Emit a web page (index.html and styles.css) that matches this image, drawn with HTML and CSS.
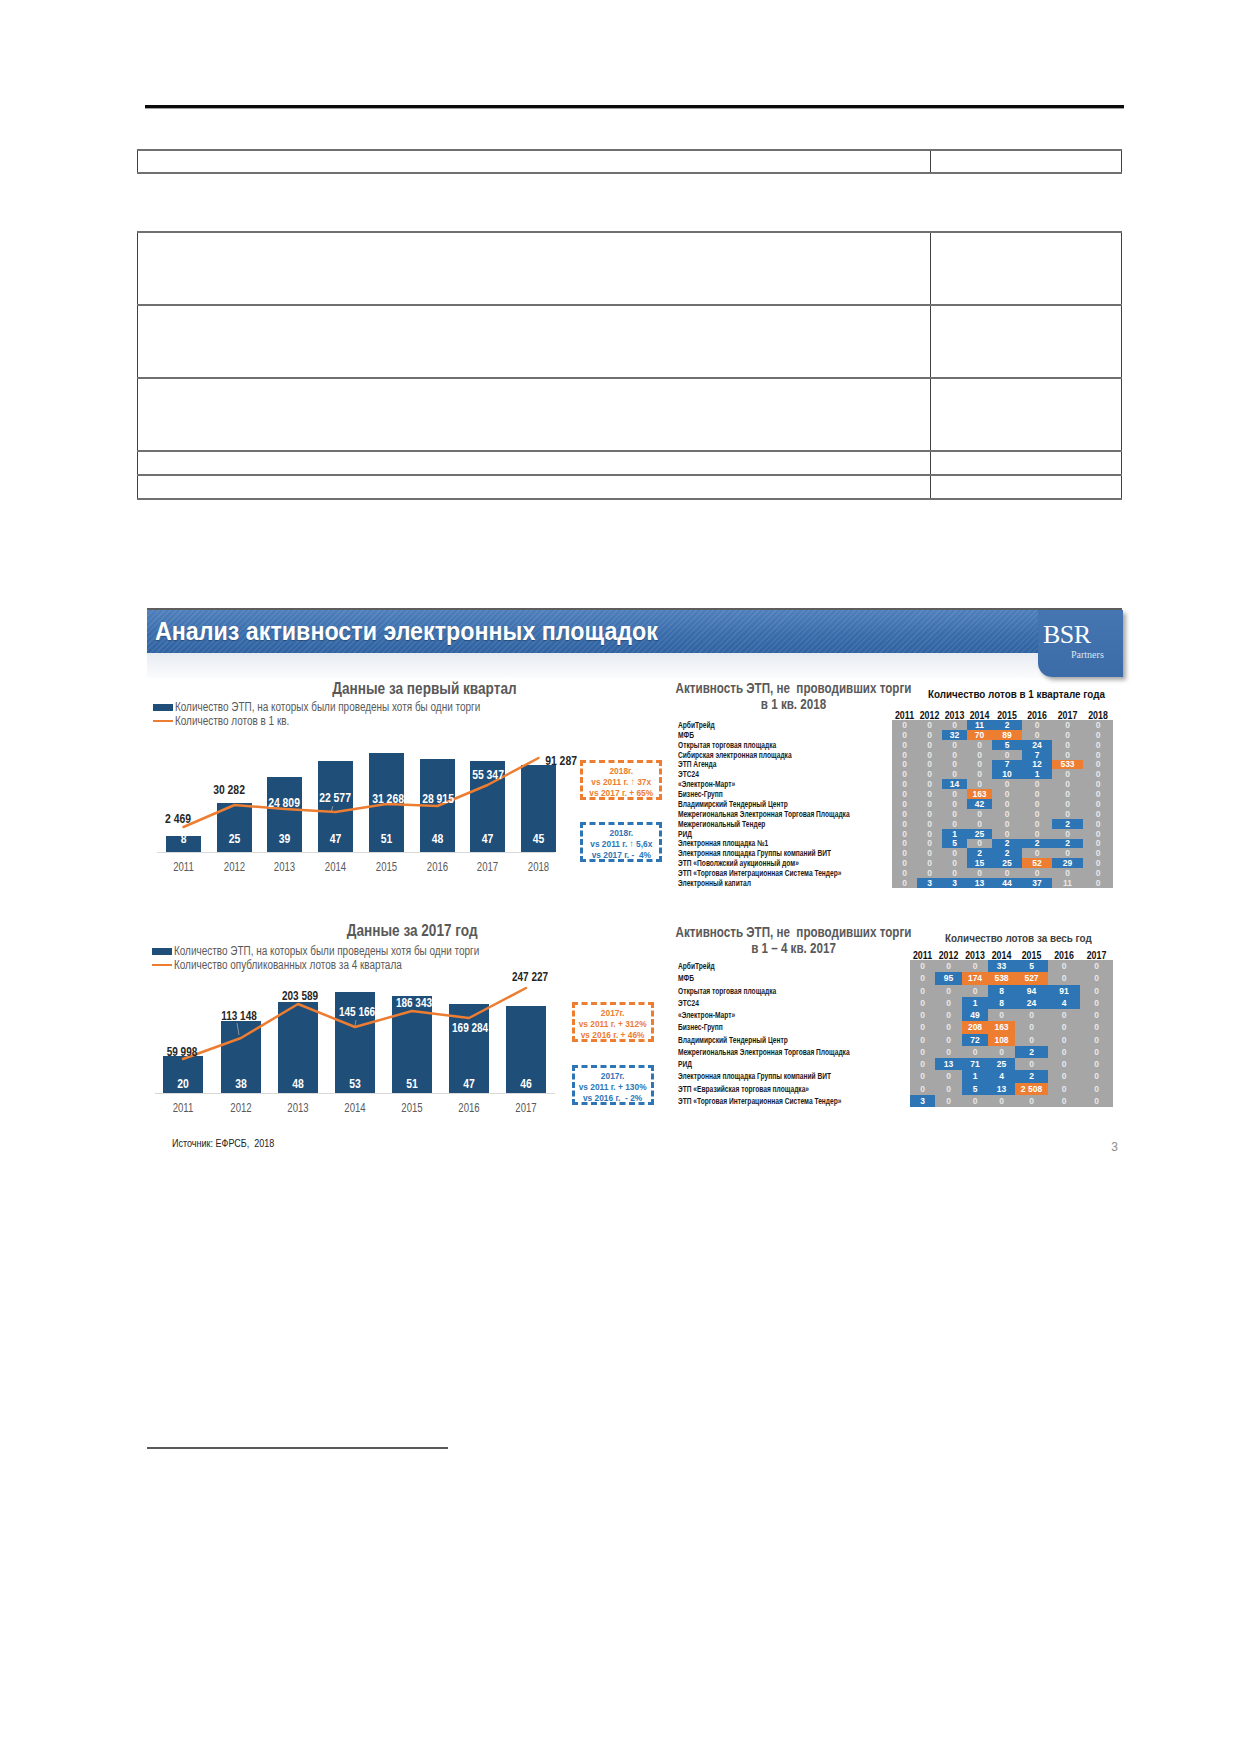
FILE: index.html
```html
<!DOCTYPE html>
<html lang="ru">
<head>
<meta charset="utf-8">
<title>Анализ активности электронных площадок</title>
<link rel="stylesheet" href="styles.css">
</head>
<body>
<div class="doc">
  <div class="rule"></div>

  <table class="t1">
    <colgroup><col class="ca"><col class="cb"></colgroup>
    <tr><td></td><td></td></tr>
  </table>

  <table class="t2">
    <colgroup><col class="ca"><col class="cb"></colgroup>
    <tr class="tall"><td></td><td></td></tr>
    <tr class="tall"><td></td><td></td></tr>
    <tr class="tall"><td></td><td></td></tr>
    <tr class="short"><td></td><td></td></tr>
    <tr class="short"><td></td><td></td></tr>
  </table>

  <section class="slide">
    <header class="slide-head">
      <h1>Анализ активности электронных площадок</h1>
      <div class="logo"><span class="bsr">BSR</span><span class="partners">Partners</span></div>
    </header>
    <div class="subband"></div>

    <div class="sec sec1">
      <div class="chart">
        <h2 class="ct ct1">Данные за первый квартал</h2>
        <ul class="legend">
          <li><span class="sw-bar"></span><span class="lt">Количество ЭТП, на которых были проведены хотя бы одни торги</span></li>
          <li><span class="sw-line"></span><span class="lt">Количество лотов в 1 кв.</span></li>
        </ul>
        <svg class="plot" width="430" height="150" viewBox="0 0 430 150">
          <line class="axis" x1="10" y1="124.5" x2="408" y2="124.5"/>
          <g class="bars">
            <rect x="19" y="108" width="35" height="16"/>
            <rect x="70" y="75" width="35" height="49"/>
            <rect x="120" y="49" width="35" height="75"/>
            <rect x="171" y="33" width="35" height="91"/>
            <rect x="222" y="25" width="35" height="99"/>
            <rect x="273" y="31" width="35" height="93"/>
            <rect x="323" y="33" width="35" height="91"/>
            <rect x="374" y="37" width="35" height="87"/>
          </g>
          <g class="bval">
            <text x="36.5" y="115">8</text>
            <text x="87.5" y="115">25</text>
            <text x="137.5" y="115">39</text>
            <text x="188.5" y="115">47</text>
            <text x="239.5" y="115">51</text>
            <text x="290.5" y="115">48</text>
            <text x="340.5" y="115">47</text>
            <text x="391.5" y="115">45</text>
          </g>
          <g class="years">
            <text x="36.5" y="143.5">2011</text>
            <text x="87.5" y="143.5">2012</text>
            <text x="137.5" y="143.5">2013</text>
            <text x="188.5" y="143.5">2014</text>
            <text x="239.5" y="143.5">2015</text>
            <text x="290.5" y="143.5">2016</text>
            <text x="340.5" y="143.5">2017</text>
            <text x="391.5" y="143.5">2018</text>
          </g>
          <line class="leader" x1="186" y1="78" x2="184" y2="84"/>
          <polyline class="trend" points="36.5,99 87.5,77 138,81 188.5,84 239.5,76 290.5,78 340.5,57 391.5,30"/>
          <g class="lval">
            <text x="31" y="95">2 469</text>
            <text x="82" y="66">30 282</text>
            <text class="w" x="137" y="79">24 809</text>
            <text class="w" x="188" y="74">22 577</text>
            <text class="w" x="241" y="75">31 268</text>
            <text class="w" x="291" y="75">28 915</text>
            <text class="w" x="341" y="51">55 347</text>
            <text x="414" y="37">91 287</text>
          </g>
        </svg>
      </div>

      <div class="notes">
        <div class="note orange"><div class="nt">2018г.<br>vs 2011 г. ↑ 37x<br>vs 2017 г. + 65%</div></div>
        <div class="note blue"><div class="nt">2018г.<br>vs 2011 г. ↑ 5,6x<br>vs 2017 г. -&nbsp; 4%</div></div>
      </div>

      <div class="heat">
        <div class="heat-top">
          <h3><span>Активность ЭТП, не&nbsp; проводивших торги</span><span>в 1 кв. 2018</span></h3>
          <div class="heat-cap cap1">Количество лотов в 1 квартале года</div>
        </div>
        <div class="hgrid g1">
          <span></span><b>2011</b><b>2012</b><b>2013</b><b>2014</b><b>2015</b><b>2016</b><b>2017</b><b>2018</b>
          <em>АрбиТрейд</em><i>0</i><i>0</i><i>0</i><i class="b">11</i><i class="b">2</i><i>0</i><i>0</i><i>0</i>
          <em>МФБ</em><i>0</i><i>0</i><i class="b">32</i><i class="o">70</i><i class="o">89</i><i>0</i><i>0</i><i>0</i>
          <em>Открытая торговая площадка</em><i>0</i><i>0</i><i>0</i><i>0</i><i class="b">5</i><i class="b">24</i><i>0</i><i>0</i>
          <em>Сибирская электронная площадка</em><i>0</i><i>0</i><i>0</i><i>0</i><i>0</i><i class="b">7</i><i>0</i><i>0</i>
          <em>ЭТП Агенда</em><i>0</i><i>0</i><i>0</i><i>0</i><i class="b">7</i><i class="b">12</i><i class="o">533</i><i>0</i>
          <em>ЭТС24</em><i>0</i><i>0</i><i>0</i><i>0</i><i class="b">10</i><i class="b">1</i><i>0</i><i>0</i>
          <em>«Электрон-Март»</em><i>0</i><i>0</i><i class="b">14</i><i>0</i><i>0</i><i>0</i><i>0</i><i>0</i>
          <em>Бизнес-Групп</em><i>0</i><i>0</i><i>0</i><i class="o">163</i><i>0</i><i>0</i><i>0</i><i>0</i>
          <em>Владимирский Тендерный Центр</em><i>0</i><i>0</i><i>0</i><i class="b">42</i><i>0</i><i>0</i><i>0</i><i>0</i>
          <em>Межрегиональная Электронная Торговая Площадка</em><i>0</i><i>0</i><i>0</i><i>0</i><i>0</i><i>0</i><i>0</i><i>0</i>
          <em>Межрегиональный Тендер</em><i>0</i><i>0</i><i>0</i><i>0</i><i>0</i><i>0</i><i class="b">2</i><i>0</i>
          <em>РИД</em><i>0</i><i>0</i><i class="b">1</i><i class="b">25</i><i>0</i><i>0</i><i>0</i><i>0</i>
          <em>Электронная площадка №1</em><i>0</i><i>0</i><i class="b">5</i><i>0</i><i class="b">2</i><i class="b">2</i><i class="b">2</i><i>0</i>
          <em>Электронная площадка Группы компаний ВИТ</em><i>0</i><i>0</i><i>0</i><i class="b">2</i><i class="b">2</i><i>0</i><i>0</i><i>0</i>
          <em>ЭТП «Поволжский аукционный дом»</em><i>0</i><i>0</i><i>0</i><i class="b">15</i><i class="b">25</i><i class="o">52</i><i class="b">29</i><i>0</i>
          <em>ЭТП «Торговая Интеграционная Система Тендер»</em><i>0</i><i>0</i><i>0</i><i>0</i><i>0</i><i>0</i><i>0</i><i>0</i>
          <em>Электронный капитал</em><i>0</i><i class="b">3</i><i class="b">3</i><i class="b">13</i><i class="b">44</i><i class="b">37</i><i>11</i><i>0</i>
        </div>
      </div>
    </div>

    <div class="sec sec2">
      <div class="chart">
        <h2 class="ct ct2">Данные за 2017 год</h2>
        <ul class="legend legend2">
          <li><span class="sw-bar"></span><span class="lt">Количество ЭТП, на которых были проведены хотя бы одни торги</span></li>
          <li><span class="sw-line"></span><span class="lt">Количество опубликованных лотов за 4 квартала</span></li>
        </ul>
        <svg class="plot" width="430" height="150" viewBox="0 0 430 150">
          <line class="axis" x1="8" y1="121.5" x2="408" y2="121.5"/>
          <g class="bars">
            <rect x="16" y="84" width="40" height="37"/>
            <rect x="74" y="49" width="40" height="72"/>
            <rect x="131" y="30" width="40" height="91"/>
            <rect x="188" y="20" width="40" height="101"/>
            <rect x="245" y="24" width="40" height="97"/>
            <rect x="302" y="32" width="40" height="89"/>
            <rect x="359" y="34" width="40" height="87"/>
          </g>
          <g class="bval">
            <text x="36" y="116">20</text>
            <text x="94" y="116">38</text>
            <text x="151" y="116">48</text>
            <text x="208" y="116">53</text>
            <text x="265" y="116">51</text>
            <text x="322" y="116">47</text>
            <text x="379" y="116">46</text>
          </g>
          <g class="years">
            <text x="36" y="140.5">2011</text>
            <text x="94" y="140.5">2012</text>
            <text x="151" y="140.5">2013</text>
            <text x="208" y="140.5">2014</text>
            <text x="265" y="140.5">2015</text>
            <text x="322" y="140.5">2016</text>
            <text x="379" y="140.5">2017</text>
          </g>
          <line class="leader" x1="90" y1="51" x2="92" y2="63"/>
          <line class="leader" x1="209" y1="48" x2="208" y2="54"/>
          <polyline class="trend" points="36,87 94,66 151,32 208,55 265,39 322,46 379,16"/>
          <g class="lval lval2">
            <text x="35" y="84">59 998</text>
            <text x="92" y="48">113 148</text>
            <text x="153" y="28">203 589</text>
            <text class="w" x="210" y="44">145 166</text>
            <text class="w" x="267" y="35">186 343</text>
            <text class="w" x="323" y="60">169 284</text>
            <text x="383" y="9">247 227</text>
          </g>
        </svg>
      </div>

      <div class="notes notes2">
        <div class="note orange"><div class="nt">2017г.<br>vs 2011 г. + 312%<br>vs 2016 г. + 46%</div></div>
        <div class="note blue"><div class="nt">2017г.<br>vs 2011 г. + 130%<br>vs 2016 г.&nbsp; - 2%</div></div>
      </div>

      <div class="heat">
        <div class="heat-top top2">
          <h3><span>Активность ЭТП, не&nbsp; проводивших торги</span><span>в 1 – 4 кв. 2017</span></h3>
          <div class="heat-cap cap2">Количество лотов за весь год</div>
        </div>
        <div class="hgrid g2">
          <span></span><b>2011</b><b>2012</b><b>2013</b><b>2014</b><b>2015</b><b>2016</b><b>2017</b>
          <em>АрбиТрейд</em><i>0</i><i>0</i><i>0</i><i class="b">33</i><i class="b">5</i><i>0</i><i>0</i>
          <em>МФБ</em><i>0</i><i class="b">95</i><i class="o">174</i><i class="o">538</i><i class="o">527</i><i>0</i><i>0</i>
          <em>Открытая торговая площадка</em><i>0</i><i>0</i><i>0</i><i class="b">8</i><i class="b">94</i><i class="b">91</i><i>0</i>
          <em>ЭТС24</em><i>0</i><i>0</i><i class="b">1</i><i class="b">8</i><i class="b">24</i><i class="b">4</i><i>0</i>
          <em>«Электрон-Март»</em><i>0</i><i>0</i><i class="b">49</i><i>0</i><i>0</i><i>0</i><i>0</i>
          <em>Бизнес-Групп</em><i>0</i><i>0</i><i class="o">208</i><i class="o">163</i><i>0</i><i>0</i><i>0</i>
          <em>Владимирский Тендерный Центр</em><i>0</i><i>0</i><i class="b">72</i><i class="o">108</i><i>0</i><i>0</i><i>0</i>
          <em>Межрегиональная Электронная Торговая Площадка</em><i>0</i><i>0</i><i>0</i><i>0</i><i class="b">2</i><i>0</i><i>0</i>
          <em>РИД</em><i>0</i><i class="b">13</i><i class="b">71</i><i class="b">25</i><i>0</i><i>0</i><i>0</i>
          <em>Электронная площадка Группы компаний ВИТ</em><i>0</i><i>0</i><i class="b">1</i><i class="b">4</i><i class="b">2</i><i>0</i><i>0</i>
          <em>ЭТП «Евразийская торговая площадка»</em><i>0</i><i>0</i><i class="b">5</i><i class="b">13</i><i class="o">2 508</i><i>0</i><i>0</i>
          <em>ЭТП «Торговая Интеграционная Система Тендер»</em><i class="b">3</i><i>0</i><i>0</i><i>0</i><i>0</i><i>0</i><i>0</i>
        </div>
      </div>
    </div>

    <footer class="slide-foot">
      <span class="src">Источник: ЕФРСБ,&nbsp; 2018</span>
      <span class="pg">3</span>
    </footer>
  </section>

  <div class="fn-rule"></div>
</div>
</body>
</html>
```

FILE: styles.css
```css
html, body {
  margin: 0;
  padding: 0;
  background: #ffffff;
}

body {
  font-family: "Liberation Sans", Arial, sans-serif;
  color: #111;
}

.doc {
  width: 1239px;
  height: 1752px;
  overflow: hidden;
}

/* ---------- document part ---------- */
.rule {
  margin: 105px 0 0 145px;
  width: 979px;
  height: 3px;
  background: #0b0b0b;
  box-shadow: 0 1px 0 #a0a0a0;
}

.t1,
.t2 {
  border-collapse: collapse;
  margin-left: 137px;
  width: 984px;
  table-layout: fixed;
}

.t1 .ca, .t2 .ca { width: 793px; }
.t1 .cb, .t2 .cb { width: 191px; }

.t1 td,
.t2 td {
  padding: 0;
  border-left: 1px solid #404040;
  border-right: 1px solid #404040;
  border-top: 2px solid #707070;
  border-bottom: 2px solid #707070;
}

.t1 { margin-top: 41px; }
.t1 td { height: 21px; }

.t2 { margin-top: 57px; }
.t2 .tall td { height: 71px; }
.t2 .short td { height: 22px; }

.fn-rule {
  margin: 292px 0 0 147px;
  width: 301px;
  height: 2px;
  background: #595959;
}

/* ---------- slide ---------- */
.slide {
  position: relative;
  margin: 108px 0 0 147px;
  width: 975px;
  height: 547px;
  font-family: "Liberation Sans", Arial, sans-serif;
}

.slide-head {
  height: 43px;
  border-top: 2px solid #5e5e5e;
  display: flex;
  align-items: center;
  padding-left: 8px;
  background:
    repeating-linear-gradient(135deg, rgba(255,255,255,0.08) 0 1.5px, rgba(255,255,255,0) 1.5px 4px),
    linear-gradient(180deg, #4f80bb 0%, #3a6dab 55%, #2f62a1 100%);
}

.slide-head h1 {
  margin: 0;
  font-size: 25px;
  font-weight: bold;
  color: #ffffff;
  text-shadow: 0 1px 1px rgba(0, 0, 0, 0.3);
  white-space: nowrap;
  transform: scaleX(0.93);
  transform-origin: left center;
}

.logo {
  position: absolute;
  top: 2px;
  left: 891px;
  width: 85px;
  height: 67px;
  box-sizing: border-box;
  border-bottom-left-radius: 14px;
  background: linear-gradient(180deg, #4576b1 0%, #3b6ca8 100%);
  box-shadow: 3px 3px 4px rgba(0, 0, 0, 0.35);
  display: flex;
  flex-direction: column;
  align-items: flex-start;
  padding: 13px 0 0 5px;
  font-family: "Liberation Serif", "Times New Roman", serif;
  color: #ffffff;
}

.logo .bsr {
  font-size: 26px;
  line-height: 24px;
  letter-spacing: -0.5px;
}

.logo .partners {
  margin: 2px 0 0 28px;
  font-size: 10px;
  line-height: 11px;
  color: #dbe5f1;
}

.subband {
  height: 25px;
  background: linear-gradient(180deg, #e7ecf2 0%, #f3f5f8 60%, #fbfcfd 100%);
}

.sec {
  display: flex;
}

.sec1 { height: 242px; }
.sec2 { height: 212px; }

.chart {
  width: 430px;
  flex: none;
}

.ct {
  margin: 0;
  padding-top: 2px;
  font-size: 16px;
  line-height: 18px;
  font-weight: bold;
  color: #595959;
  white-space: nowrap;
  transform: scaleX(0.85);
  transform-origin: left top;
}

.ct1 { padding-left: 218px; }
.ct2 { padding-left: 235px; }

.legend {
  list-style: none;
  margin: 2px 0 0 6px;
  padding: 0;
  font-size: 12px;
  line-height: 14px;
  color: #595959;
}

.legend2 {
  margin: 4px 0 0 5px;
}

.legend li {
  display: flex;
  align-items: center;
  white-space: nowrap;
}

.legend .lt {
  display: inline-block;
  transform: scaleX(0.83);
  transform-origin: left center;
}

.sw-bar {
  flex: none;
  width: 20px;
  height: 7px;
  background: #1f4e79;
  margin-right: 2px;
}

.sw-line {
  flex: none;
  width: 20px;
  height: 2px;
  background: #ed7d31;
  margin-right: 2px;
}

.plot {
  display: block;
  overflow: visible;
}

.plot .axis {
  stroke: #d9d9d9;
  stroke-width: 1;
}

.plot .bars rect {
  fill: #1f4e79;
}

.plot text {
  font-family: "Liberation Sans", Arial, sans-serif;
  text-anchor: middle;
  transform-box: fill-box;
  transform-origin: center;
  transform: scaleX(0.8);
}

.plot .bval text {
  font-size: 13px;
  font-weight: bold;
  fill: #ffffff;
}

.plot .years text {
  font-size: 12px;
  fill: #595959;
}

.plot .lval text {
  font-size: 13px;
  font-weight: bold;
  fill: #262626;
}

.plot .lval2 text {
  font-size: 12.5px;
}

.plot .lval text.w {
  fill: #ffffff;
}

.plot .trend {
  fill: none;
  stroke: #ed7d31;
  stroke-width: 2.5;
  stroke-linejoin: round;
  stroke-linecap: round;
}

.plot .leader {
  stroke: #a6a6a6;
  stroke-width: 0.8;
}

/* notes */
.notes {
  width: 100px;
  flex: none;
  display: flex;
  flex-direction: column;
  padding-top: 82px;
  box-sizing: border-box;
}

.note {
  width: 82px;
  height: 40px;
  box-sizing: border-box;
  margin-left: 3px;
  border: 3px dashed;
  padding-top: 2px;
  font-size: 9.5px;
  line-height: 11px;
  font-weight: bold;
  text-align: center;
  white-space: nowrap;
  display: flex;
  justify-content: center;
}

.note .nt {
  transform: scaleX(0.88);
  transform-origin: center top;
}

.note + .note { margin-top: 22px; }

.notes2 .note { margin-left: -5px; }
.notes2 .note + .note { margin-top: 23px; }

.note.orange {
  border-color: #ed7d31;
  color: #ed7d31;
}

.note.blue {
  border-color: #2e75b6;
  color: #2e75b6;
}

/* heat tables */
.heat {
  width: 445px;
  flex: none;
}

.heat-top {
  display: flex;
  height: 32px;
}

.heat-top h3 {
  width: 233px;
  flex: none;
  margin: 0;
  padding-top: 2px;
  display: flex;
  flex-direction: column;
  align-items: center;
  font-size: 14px;
  line-height: 16px;
  font-weight: bold;
  color: #595959;
  white-space: nowrap;
  transform: scaleX(0.83);
  transform-origin: center top;
}

.heat-cap {
  font-size: 11.5px;
  line-height: 14px;
  font-weight: bold;
  white-space: nowrap;
  transform-origin: left top;
}

.cap1 {
  margin-left: 18px;
  padding-top: 9px;
  color: #111111;
  transform: scaleX(0.856);
}

.top2 { height: 30px; }
.top2 h3 { padding-top: 4px; }

.cap2 {
  margin-left: 35px;
  padding-top: 11px;
  color: #404040;
  transform: scaleX(0.86);
}

.hgrid {
  display: grid;
  margin-left: 1px;
  font-weight: bold;
}

.g1 {
  grid-template-columns: 214px 25px 25px 25px 25px 30px 30px 31px 30px;
  grid-template-rows: 10px repeat(17, 9.88px);
  font-size: 8.5px;
}

.g2 {
  grid-template-columns: 232px 25px 27px 26px 27px 33px 32px 33px;
  grid-template-rows: 10px repeat(12, 12.25px);
  font-size: 8.5px;
}

.hgrid b {
  font-size: 11px;
  line-height: 10px;
  text-align: center;
  color: #111111;
  white-space: nowrap;
  transform: scaleX(0.8);
  transform-origin: center;
}

.hgrid em {
  font-style: normal;
  color: #1a1a1a;
  white-space: nowrap;
  display: flex;
  align-items: center;
  transform: scaleX(0.78);
  transform-origin: left center;
}

.hgrid i {
  font-style: normal;
  background: #a6a6a6;
  color: #e8e8e8;
  display: flex;
  align-items: center;
  justify-content: center;
  white-space: nowrap;
  font-size: 8.5px;
}

.hgrid i.b {
  background: #2e75b6;
  color: #ffffff;
}

.hgrid i.o {
  background: #ed7d31;
  color: #ffffff;
}

/* footer */
.slide-foot {
  display: flex;
  justify-content: space-between;
  align-items: flex-start;
  padding: 4px 4px 0 25px;
  font-size: 11px;
  line-height: 14px;
  color: #222222;
}

.slide-foot .src {
  display: inline-block;
  transform: scaleX(0.82);
  transform-origin: left center;
}

.slide-foot .pg {
  margin-top: 4px;
  font-size: 12px;
  color: #8c8c8c;
}
```
